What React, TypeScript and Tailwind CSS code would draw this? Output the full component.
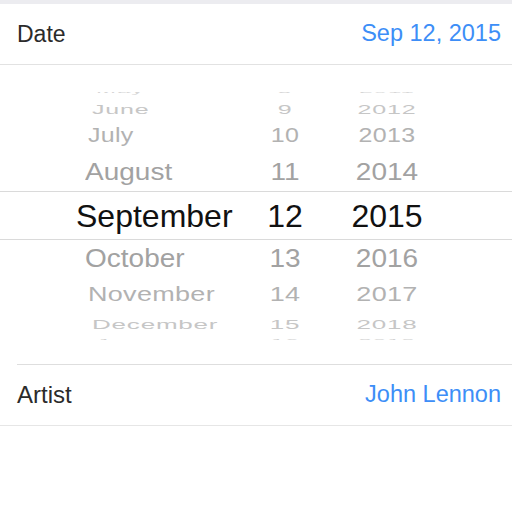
const rows = [
  { m: "May", d: "8", y: "2011", h: "h-[18px]", pl: "pl-[96px]", size: "text-[24px]", sy: "scale-y-[0.3]", color: "text-[#d6d6d6]", track: "tracking-[1px]" },
  { m: "June", d: "9", y: "2012", h: "h-[21px]", pl: "pl-[92px]", size: "text-[25px]", sy: "scale-y-[0.5]", color: "text-[#c6c6c6]", track: "tracking-[0.8px]" },
  { m: "July", d: "10", y: "2013", h: "h-[35px]", pl: "pl-[88px]", size: "text-[25px]", sy: "scale-y-[0.78]", color: "text-[#b2b2b2]", track: "tracking-[0.3px]" },
  { m: "August", d: "11", y: "2014", h: "h-[38px]", pl: "pl-[85px]", size: "text-[28px]", sy: "scale-y-[0.88]", color: "text-[#a2a2a2]", track: "tracking-[0px]" },
];

const rowsBelow = [
  { m: "October", d: "13", y: "2016", h: "h-[38px]", pl: "pl-[85px]", size: "text-[28px]", sy: "scale-y-[0.9]", color: "text-[#a2a2a2]", track: "tracking-[0px]" },
  { m: "November", d: "14", y: "2017", h: "h-[33px]", pl: "pl-[88px]", size: "text-[27px]", sy: "scale-y-[0.75]", color: "text-[#b2b2b2]", track: "tracking-[0.3px]" },
  { m: "December", d: "15", y: "2018", h: "h-[19px]", pl: "pl-[92px]", size: "text-[26px]", sy: "scale-y-[0.5]", color: "text-[#c6c6c6]", track: "tracking-[0.8px]" },
  { m: "January", d: "16", y: "2019", h: "h-[14px]", pl: "pl-[96px]", size: "text-[24px]", sy: "scale-y-[0.3]", color: "text-[#d2d2d2]", track: "tracking-[1px]" },
];

type Row = (typeof rows)[number];

function WheelRow({ r }: { r: Row }) {
  return (
    <div className={`grid grid-cols-[240px_90px_114px_1fr] items-center leading-none ${r.h} ${r.size} ${r.color} ${r.track}`}>
      <div className={`${r.pl} ${r.sy}`}>{r.m}</div>
      <div className={`text-center ${r.sy}`}>{r.d}</div>
      <div className={`text-center ${r.sy}`}>{r.y}</div>
      <div />
    </div>
  );
}

export default function App() {
  return (
    <div className="w-[512px] h-[512px] bg-white font-['Liberation_Sans',Arial,sans-serif] overflow-hidden">
      <div className="h-[4px] bg-[#ececf0]" />

      {/* Date row */}
      <div className="h-[61px] flex items-center justify-between pl-[17px] pr-[11px] border-b border-[#e2e2e2]">
        <span className="text-[23px] text-[#2b2b2b]">Date</span>
        <span className="text-[23.5px] text-[#3d8ef7]">Sep 12, 2015</span>
      </div>

      {/* Picker wheel */}
      <div className="h-[299px] pt-[27px]">
        <div className="h-[248px] overflow-hidden">
          <div className="-mt-[13px]">
            {rows.map((r) => (
              <WheelRow key={r.m} r={r} />
            ))}
            <div className="grid grid-cols-[240px_90px_114px_1fr] items-center h-[49px] border-y border-[#dadada] text-[32px] leading-none text-[#111]">
              <div className="pl-[76px]">September</div>
              <div className="text-center">12</div>
              <div className="text-center">2015</div>
              <div />
            </div>
            {rowsBelow.map((r) => (
              <WheelRow key={r.m} r={r} />
            ))}
          </div>
        </div>
      </div>

      {/* Artist row */}
      <div className="border-b border-[#e6e6e6]">
        <div className="ml-[17px] h-[61px] flex items-center justify-between pr-[11px] border-t border-[#dedede]">
          <span className="text-[24px] text-[#2b2b2b]">Artist</span>
          <span className="text-[23.5px] text-[#3d8ef7]">John Lennon</span>
        </div>
      </div>
    </div>
  );
}
